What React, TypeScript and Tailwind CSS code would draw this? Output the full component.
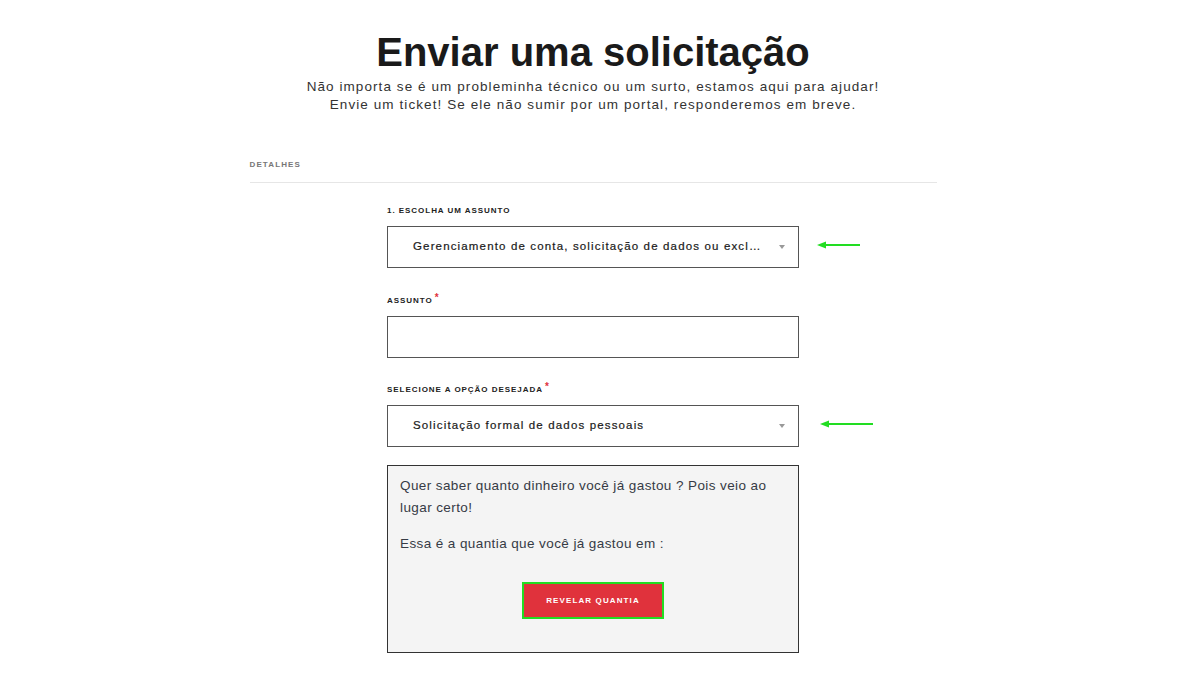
function Arrow({ width }: { width: number }) {
  return (
    <svg width={width} height="10" viewBox={`0 0 ${width} 10`} className="shrink-0">
      <line x1="6" y1="5" x2={width} y2="5" stroke="#22dd22" strokeWidth="2" />
      <polygon points="0,5 9,1.5 9,8.5" fill="#22dd22" />
    </svg>
  )
}

function Label({ text, required }: { text: string; required?: boolean }) {
  return (
    <div className="text-[8px] font-bold tracking-[0.12em] text-[#222] mb-[10px] leading-[10px]">
      {text}
      {required && <span className="text-[#e0323c] text-[10px] align-top relative -top-[3px] ml-[2px]">*</span>}
    </div>
  )
}

function SelectBox({ value, arrow, gap }: { value: string; arrow: number; gap: number }) {
  return (
    <div className="relative">
      <div className="h-[42px] border border-[#555] bg-white flex items-center pl-[25px] pr-[12px]">
        <span className="flex-1 whitespace-nowrap text-[11.5px] tracking-[0.1em] text-[#1a1a1a] [-webkit-text-stroke:0.2px_#1a1a1a]">
          {value}
        </span>
        <svg width="6" height="4" viewBox="0 0 6 4" className="mr-[1px]">
          <polygon points="0,0 6,0 3,4" fill="#999" />
        </svg>
      </div>
      <div className="absolute top-[14px]" style={{ left: 412 + gap }}>
        <Arrow width={arrow} />
      </div>
    </div>
  )
}

export default function App() {
  return (
    <div className="min-h-[675px] bg-white" style={{ fontFamily: '"Liberation Sans", Arial, sans-serif' }}>
      <div className="w-[1186px]">
        <div className="w-[687px] mx-auto">
          <h1 className="pt-[32px] text-center text-[40px] font-bold leading-[40px] text-[#1a1a1a]">
            Enviar uma solicitação
          </h1>
          <p className="mt-[6px] text-center text-[13.5px] leading-[18px] tracking-[0.08em] text-[#333]">
            Não importa se é um probleminha técnico ou um surto, estamos aqui para ajudar!
            <br />
            Envie um ticket! Se ele não sumir por um portal, responderemos em breve.
          </p>

          <div className="mt-[45px] pb-[11px] border-b border-[#e6e6e6] text-[8px] font-bold tracking-[0.14em] text-[#777]">
            DETALHES
          </div>

          <div className="w-[412px] mx-auto mt-[23px] pb-[22px]">
            <Label text="1. ESCOLHA UM ASSUNTO" />
            <SelectBox value="Gerenciamento de conta, solicitação de dados ou excl…" arrow={43} gap={18} />

            <div className="mt-[28px]">
              <Label text="ASSUNTO" required />
              <div className="h-[42px] border border-[#555] bg-white" />
            </div>

            <div className="mt-[27px]">
              <Label text="SELECIONE A OPÇÃO DESEJADA" required />
              <SelectBox value="Solicitação formal de dados pessoais" arrow={53} gap={21} />
            </div>

            <div className="mt-[18px] h-[188px] border border-[#333] bg-[#f4f4f4] px-[12px] pt-[9px]">
              <p className="text-[13.5px] leading-[22px] tracking-[0.03em] text-[#363b45]">
                Quer saber quanto dinheiro você já gastou ? Pois veio ao lugar certo!
              </p>
              <p className="mt-[14px] text-[13.5px] leading-[22px] tracking-[0.03em] text-[#363b45]">
                Essa é a quantia que você já gastou em :
              </p>
              <div className="flex justify-center mt-[27px]">
                <button className="w-[142px] h-[37px] bg-[#e0323c] border-2 border-[#22dd22] text-white text-[8px] font-bold tracking-[0.14em]">
                  REVELAR QUANTIA
                </button>
              </div>
            </div>
          </div>
        </div>
      </div>
    </div>
  )
}
